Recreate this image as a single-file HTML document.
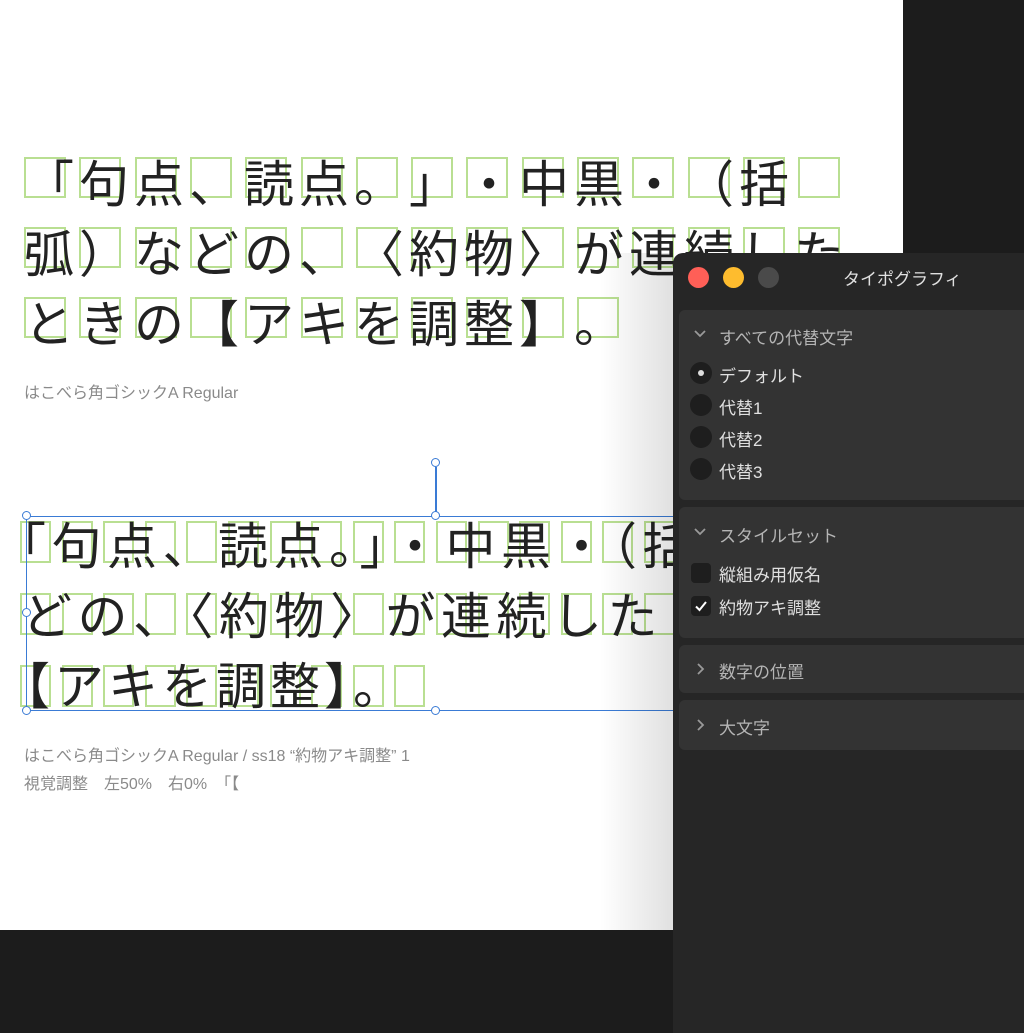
<!DOCTYPE html>
<html><head><meta charset="utf-8"><style>
body{margin:0;width:1024px;height:1024px;background:#1c1c1c;position:relative;overflow:hidden;font-family:"Liberation Sans","Noto Sans CJK JP",sans-serif}
.page{position:absolute;left:0;top:0;width:903px;height:930px;background:#fff}
.shadow{position:absolute;left:600px;top:253px;width:73px;height:677px;background:linear-gradient(to right,rgba(0,0,0,0),rgba(0,0,0,0.12))}
.t{position:absolute;white-space:nowrap;color:#222;font-family:"Noto Sans CJK JP",sans-serif;font-weight:400}
.a{text-spacing-trim:space-all;font-size:50px;letter-spacing:5px;line-height:70px}
.c{font-size:50px;letter-spacing:4px;line-height:70px}
.b{position:absolute;border:2px solid #b9df92;box-sizing:border-box}
.cap{position:absolute;color:#8a8a8a;font-size:16px;white-space:nowrap;font-family:"Liberation Sans","Noto Sans CJK JP",sans-serif}
.h{position:absolute;width:9px;height:9px;border:1.5px solid #3a7bd5;border-radius:50%;background:#fff;box-sizing:border-box}
.panel{position:absolute;left:673px;top:253px;width:360px;height:780px;background:#262626;border-top-left-radius:10px}
.sec{position:absolute;left:6px;width:360px;background:#333;border-radius:6px}
.pt{position:absolute;color:#e0e0e0;font-size:17px;white-space:nowrap;font-family:"Liberation Sans","Noto Sans CJK JP",sans-serif}
.hd{color:#b5b5b5}
.rad{position:absolute;left:11px;width:22px;height:22px;border-radius:50%;background:#1e1e1e}
.cb{position:absolute;left:12px;width:20px;height:20px;border-radius:4px;background:#1e1e1e}
.ch{position:absolute;left:14px}
</style></head><body>
<div class="page"></div>
<div id="boxes"></div>
<div class="t a" style="left:24px;top:146px">「句点、読点。」・中黒・（括<br>弧）などの、〈約物〉が連続した<br>ときの【アキを調整】。</div>
<div class="cap" style="left:24px;top:379px">はこべら角ゴシックA Regular</div>
<div class="t c" style="left:-4px;top:508px;letter-spacing:5.5px">「句点、読点。」・中黒・（括</div>
<div class="t c" style="left:22px;top:578px;letter-spacing:5.5px">どの、〈約物〉が連続したと</div>
<div class="t c" style="left:0px;top:648px">【アキを調整】。</div>
<div style="position:absolute;left:26px;top:516px;width:700px;height:195px;border:1.5px solid #3a7bd5;box-sizing:border-box"></div>
<div style="position:absolute;left:435px;top:467px;width:1.5px;height:49px;background:#3a7bd5"></div>
<div class="h" style="left:431px;top:458px"></div>
<div class="h" style="left:22px;top:511px"></div>
<div class="h" style="left:431px;top:511px"></div>
<div class="h" style="left:22px;top:608px"></div>
<div class="h" style="left:22px;top:706px"></div>
<div class="h" style="left:431px;top:706px"></div>
<div class="cap" style="left:24px;top:742px">はこべら角ゴシックA Regular / ss18 “約物アキ調整” 1</div>
<div class="cap" style="left:24px;top:770px">視覚調整　左50%　右0%　「【</div>
<div class="shadow"></div>
<div class="panel">
<div style="position:absolute;left:15px;top:14px;width:21px;height:21px;border-radius:50%;background:#ff5f57"></div>
<div style="position:absolute;left:50px;top:14px;width:21px;height:21px;border-radius:50%;background:#febc2e"></div>
<div style="position:absolute;left:85px;top:14px;width:21px;height:21px;border-radius:50%;background:#4a4a4a"></div>
<div class="pt" style="left:170px;top:12px;font-size:17px">タイポグラフィ</div>
<div class="sec" style="top:57px;height:190px">
<svg class="ch" style="top:19px" width="14" height="10" viewBox="0 0 14 10"><path d="M2 2l5 5 5-5" stroke="#9a9a9a" stroke-width="1.8" fill="none"/></svg>
<div class="pt hd" style="left:40px;top:14px">すべての代替文字</div>
<div class="rad" style="top:52px"><div style="position:absolute;left:8px;top:8px;width:6px;height:6px;border-radius:50%;background:#ddd"></div></div>
<div class="pt" style="left:40px;top:52px">デフォルト</div>
<div class="rad" style="top:84px"></div><div class="pt" style="left:40px;top:84px">代替1</div>
<div class="rad" style="top:116px"></div><div class="pt" style="left:40px;top:116px">代替2</div>
<div class="rad" style="top:148px"></div><div class="pt" style="left:40px;top:148px">代替3</div>
</div>
<div class="sec" style="top:254px;height:131px">
<svg class="ch" style="top:20px" width="14" height="10" viewBox="0 0 14 10"><path d="M2 2l5 5 5-5" stroke="#9a9a9a" stroke-width="1.8" fill="none"/></svg>
<div class="pt hd" style="left:40px;top:15px">スタイルセット</div>
<div class="cb" style="top:56px"></div><div class="pt" style="left:40px;top:54px">縦組み用仮名</div>
<div class="cb" style="top:89px"><svg width="20" height="20" viewBox="0 0 20 20"><path d="M5 10.5l3.5 3.5 6.5-8" stroke="#fff" stroke-width="2" fill="none"/></svg></div>
<div class="pt" style="left:40px;top:87px">約物アキ調整</div>
</div>
<div class="sec" style="top:392px;height:48px">
<svg class="ch" style="top:17px;left:17px" width="10" height="14" viewBox="0 0 10 14"><path d="M2 2l5 5-5 5" stroke="#9a9a9a" stroke-width="1.8" fill="none"/></svg>
<div class="pt hd" style="left:40px;top:13px">数字の位置</div>
</div>
<div class="sec" style="top:447px;height:50px">
<svg class="ch" style="top:18px;left:17px" width="10" height="14" viewBox="0 0 10 14"><path d="M2 2l5 5-5 5" stroke="#9a9a9a" stroke-width="1.8" fill="none"/></svg>
<div class="pt hd" style="left:40px;top:14px">大文字</div>
</div>
</div>
<script>
var h='';
[[157,15],[227,15],[297,11]].forEach(function(r){for(var i=0;i<r[1];i++){h+='<div class="b" style="left:'+(24+55.3*i)+'px;top:'+r[0]+'px;width:42px;height:41px"></div>';}});
[[521,16],[593,16],[665,10]].forEach(function(r){for(var i=0;i<r[1];i++){h+='<div class="b" style="left:'+(20+41.6*i)+'px;top:'+r[0]+'px;width:31px;height:42px"></div>';}});
document.getElementById('boxes').innerHTML=h;
</script>
</body></html>
